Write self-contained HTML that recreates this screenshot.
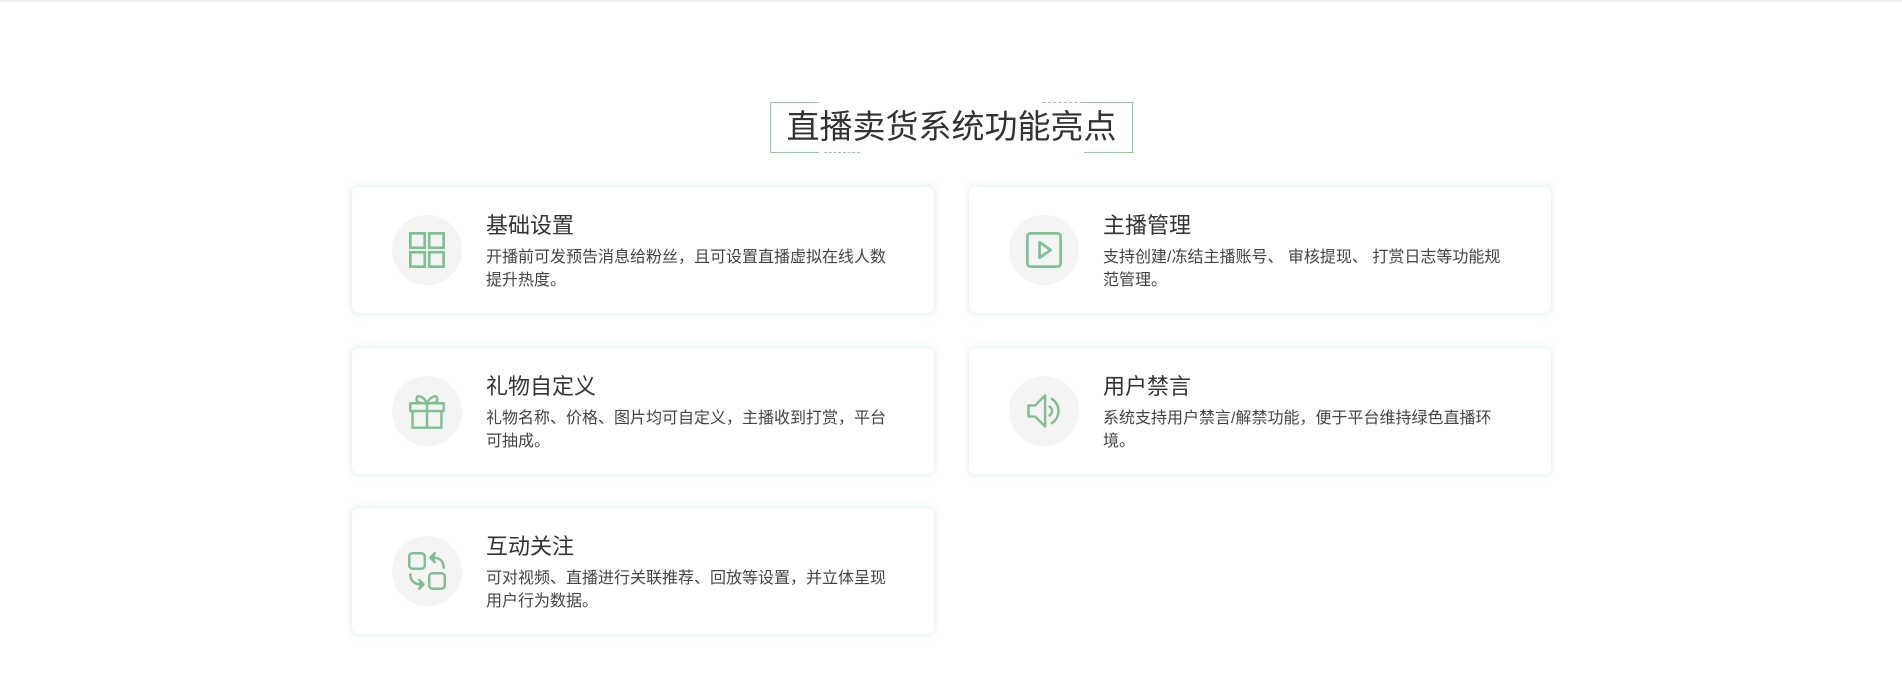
<!DOCTYPE html>
<html><head><meta charset="utf-8"><style>
*{margin:0;padding:0;box-sizing:border-box}
body{width:1902px;height:678px;background:#fff;position:relative;overflow:hidden;font-family:"Liberation Sans","Noto Sans CJK SC",sans-serif}
.topline{position:absolute;left:0;top:0;width:1902px;height:2px;background:#f3f3f3}
.tb{position:absolute;left:770px;top:102px;width:363px;height:51px;border-left:1px solid #8ccaa0;border-right:1px solid #8ccaa0}
.ln{position:absolute;height:0;border-top:1px solid #8ccaa0}
.ln.d{border-top:1px dashed #8ccaa0}
.title{position:absolute;left:770px;top:102px;width:363px;height:51px;text-align:center;line-height:50px;font-size:33px;color:#333}
.card{position:absolute;width:582px;height:126px;background:#fff;border-radius:7px;box-shadow:0 0 6px 2px rgba(120,190,160,.18)}
.circ{position:absolute;left:40px;top:28px;width:70px;height:70px;border-radius:50%;background:#f4f4f4}
.circ svg{position:absolute;left:15px;top:15px;width:40px;height:40px}
.card h3{position:absolute;left:134px;top:26px;font-size:22px;font-weight:normal;color:#333;line-height:26px}
.card p{position:absolute;left:134px;top:59px;width:410px;font-size:16px;line-height:23px;color:#444}
</style></head><body>
<div class="topline"></div>
<div class="tb"></div>
<div class="ln" style="left:770px;top:102px;width:49px"></div>
<div class="ln d" style="left:1043px;top:102px;width:40px"></div>
<div class="ln" style="left:1084px;top:102px;width:50px"></div>
<div class="ln" style="left:770px;top:152px;width:49px"></div>
<div class="ln d" style="left:824px;top:152px;width:36px"></div>
<div class="ln" style="left:1084px;top:152px;width:50px"></div>
<div class="title">直播卖货系统功能亮点</div>

<div class="card" style="left:352px;top:187px">
<div class="circ"><svg viewBox="0 0 36 36" fill="none" stroke="#7fbf94" stroke-width="2.4"><rect x="3" y="3" width="13" height="13"/><rect x="20" y="3" width="13" height="13"/><rect x="3" y="20" width="13" height="13"/><rect x="20" y="20" width="13" height="13"/></svg></div>
<h3>基础设置</h3><p>开播前可发预告消息给粉丝，且可设置直播虚拟在线人数提升热度。</p></div>

<div class="card" style="left:969px;top:187px">
<div class="circ"><svg viewBox="0 0 36 36" fill="none" stroke="#7fbf94" stroke-width="2.4" stroke-linejoin="round"><rect x="3" y="3" width="30" height="30" rx="3"/><path d="M14 11 L24 18 L14 25 Z"/></svg></div>
<h3>主播管理</h3><p>支持创建/冻结主播账号、 审核提现、 打赏日志等功能规范管理。</p></div>

<div class="card" style="left:352px;top:348px">
<div class="circ"><svg viewBox="0 0 36 36" fill="none" stroke="#7fbf94" stroke-width="2.2" stroke-linejoin="round"><rect x="3" y="11" width="30" height="7"/><path d="M5 18 V33 H31 V18 M18 11 V33 M18 11 C14 3 7 3 9 9 C10 11 14 11 18 11 C22 11 26 11 27 9 C29 3 22 3 18 11"/></svg></div>
<h3>礼物自定义</h3><p>礼物名称、价格、图片均可自定义，主播收到打赏，平台可抽成。</p></div>

<div class="card" style="left:969px;top:348px">
<div class="circ"><svg viewBox="0 0 36 36" fill="none" stroke="#7fbf94" stroke-width="2.2" stroke-linejoin="round" stroke-linecap="round"><path d="M4 13 H10 L19 4 V32 L10 23 H4 Z"/><path d="M23 14 C26 16 26 20 23 22"/><path d="M25 7 C33 12 33 24 25 29"/></svg></div>
<h3>用户禁言</h3><p>系统支持用户禁言/解禁功能，便于平台维持绿色直播环境。</p></div>

<div class="card" style="left:352px;top:508px">
<div class="circ"><svg viewBox="0 0 36 36" fill="none" stroke="#7fbf94" stroke-width="2.2" stroke-linejoin="round" stroke-linecap="round"><rect x="2" y="2" width="14" height="14" rx="3"/><rect x="20" y="20" width="14" height="14" rx="3"/><path d="M33 15 C33 9 29 6 24 6"/><path d="M25 2 L21 6 L25 10" fill="#7fbf94"/><path d="M3 21 C3 27 7 30 12 30"/><path d="M11 26 L15 30 L11 34" fill="#7fbf94"/></svg></div>
<h3>互动关注</h3><p>可对视频、直播进行关联推荐、回放等设置，并立体呈现用户行为数据。</p></div>
</body></html>
